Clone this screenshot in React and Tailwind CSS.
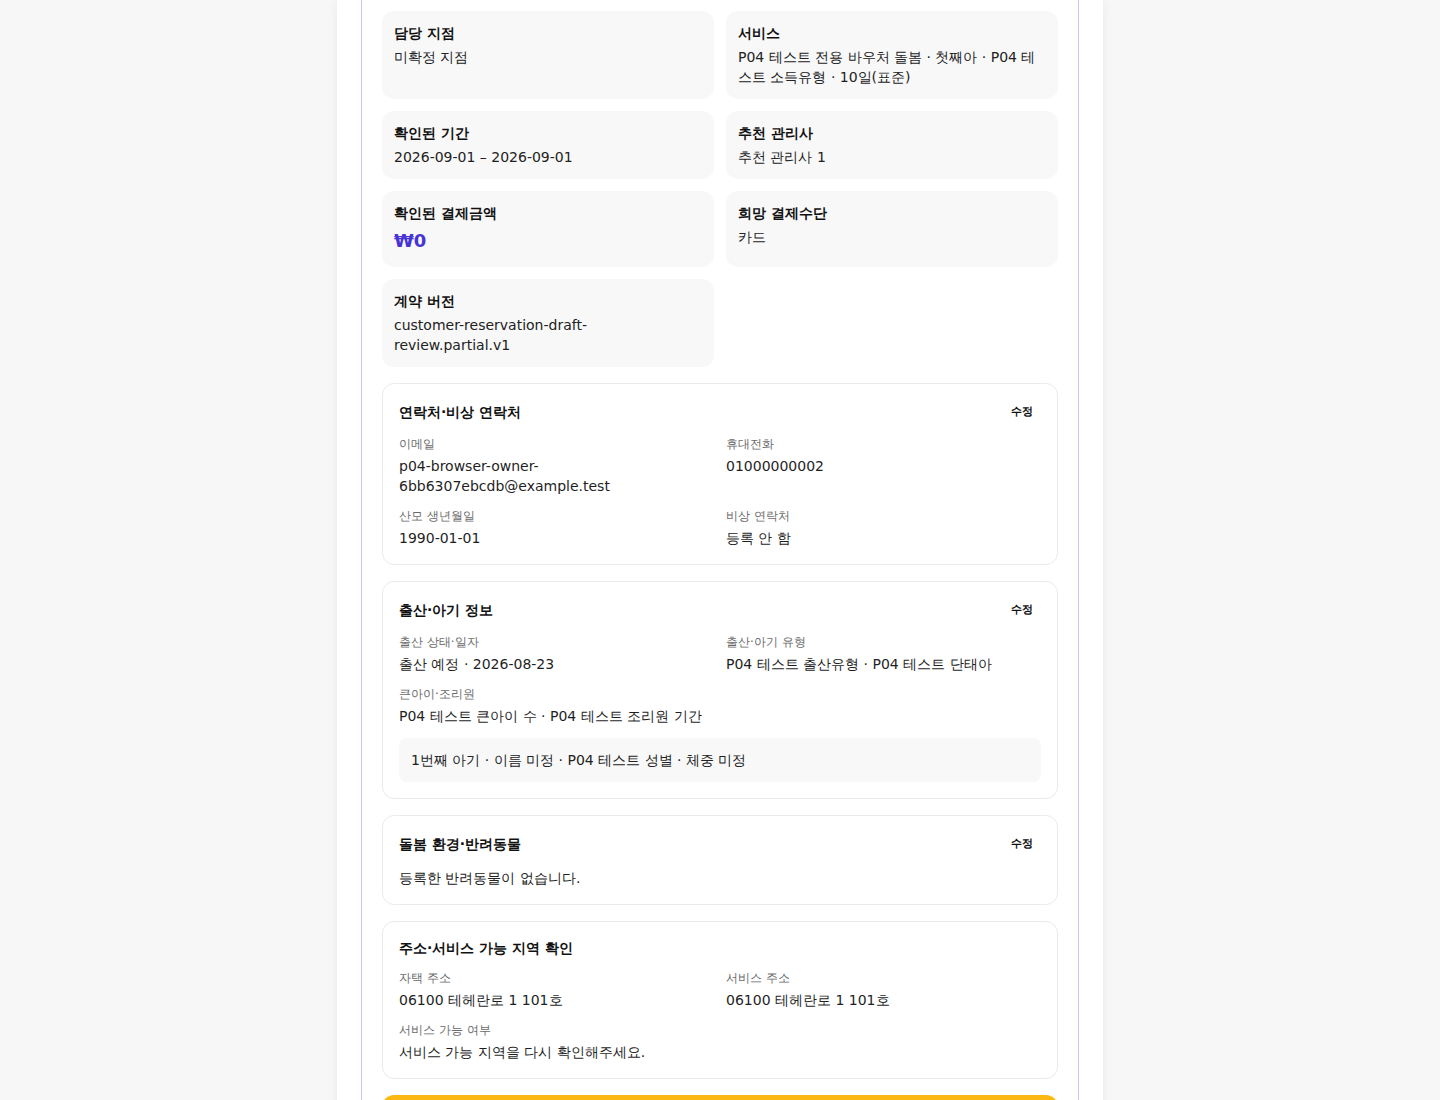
import React from 'react';

const summary = [
	{ label: '담당 지점', value: '미확정 지점' },
	{ label: '서비스', value: 'P04 테스트 전용 바우처 돌봄 · 첫째아 · P04 테스트 소득유형 · 10일(표준)' },
	{ label: '확인된 기간', value: '2026-09-01 – 2026-09-01' },
	{ label: '추천 관리사', value: '추천 관리사 1' },
	{ label: '확인된 결제금액', value: '₩0', price: true },
	{ label: '희망 결제수단', value: '카드' },
	{ label: '계약 버전', value: 'customer-reservation-draft-review.partial.v1' },
];

function Field({ label, value }) {
	return (
		<div>
			<div className="text-xs leading-4 text-[#6b6b6b]">{label}</div>
			<div className="mt-1 text-sm leading-5 text-[#1f1f1f] break-words">{value}</div>
		</div>
	);
}

function Section({ title, editable, children }) {
	return (
		<section className="rounded-xl border border-[#ebebeb] bg-white p-4">
			<div className="flex items-center justify-between">
				<h3 className="text-sm leading-5 font-bold text-[#111]">{title}</h3>
				{editable && (
					<button type="button" className="h-6 pl-2.5 pr-2 text-[11px] font-semibold text-[#111]">
						수정
					</button>
				)}
			</div>
			<div className="mt-3">{children}</div>
		</section>
	);
}

export default function App() {
	// hangul comes from the system fallback here, it is full width like the reference
	return (
		<div
			className="min-h-screen bg-[#f7f7f7]"
			style={{ fontFamily: '"DejaVu Sans", sans-serif' }}
		>
			<div className="mx-auto w-[766px] min-h-screen bg-white px-6 shadow-[0_0_12px_rgba(0,0,0,0.06)]">
				<div className="border border-t-0 border-[#c9c3f7] px-5 pt-[11px] pb-6">
					<div className="grid grid-cols-2 gap-3">
						{summary.map((item) => (
							<div key={item.label} className="rounded-xl bg-[#f8f8f8] p-3">
								<div className="text-sm leading-5 font-bold text-[#111]">{item.label}</div>
								{item.price ? (
									<div className="mt-1 text-lg leading-7 font-bold text-[#4733d6]">{item.value}</div>
								) : (
									<div className="mt-1 text-sm leading-5 text-[#222] break-words">{item.value}</div>
								)}
							</div>
						))}
					</div>

					<div className="mt-4 flex flex-col gap-4">
						<Section title="연락처·비상 연락처" editable>
							<div className="grid grid-cols-2 gap-3">
								<Field label="이메일" value="p04-browser-owner-6bb6307ebcdb@example.test" />
								<Field label="휴대전화" value="01000000002" />
								<Field label="산모 생년월일" value="1990-01-01" />
								<Field label="비상 연락처" value="등록 안 함" />
							</div>
						</Section>

						<Section title="출산·아기 정보" editable>
							<div className="grid grid-cols-2 gap-3">
								<Field label="출산 상태·일자" value="출산 예정 · 2026-08-23" />
								<Field label="출산·아기 유형" value="P04 테스트 출산유형 · P04 테스트 단태아" />
								<Field label="큰아이·조리원" value="P04 테스트 큰아이 수 · P04 테스트 조리원 기간" />
							</div>
							<div className="mt-3 rounded-lg bg-[#f8f8f8] p-3 text-sm leading-5 text-[#222]">
								1번째 아기 · 이름 미정 · P04 테스트 성별 · 체중 미정
							</div>
						</Section>

						<Section title="돌봄 환경·반려동물" editable>
							<p className="text-sm leading-5 text-[#222]">등록한 반려동물이 없습니다.</p>
						</Section>

						<Section title="주소·서비스 가능 지역 확인">
							<div className="grid grid-cols-2 gap-3">
								<Field label="자택 주소" value="06100 테헤란로 1 101호" />
								<Field label="서비스 주소" value="06100 테헤란로 1 101호" />
								<Field label="서비스 가능 여부" value="서비스 가능 지역을 다시 확인해주세요." />
							</div>
						</Section>

						<button
							type="button"
							className="h-12 w-full rounded-xl bg-[#fbb814] text-sm font-bold text-[#111]"
						>
							예약 신청하기
						</button>
					</div>
				</div>
			</div>
		</div>
	);
}
